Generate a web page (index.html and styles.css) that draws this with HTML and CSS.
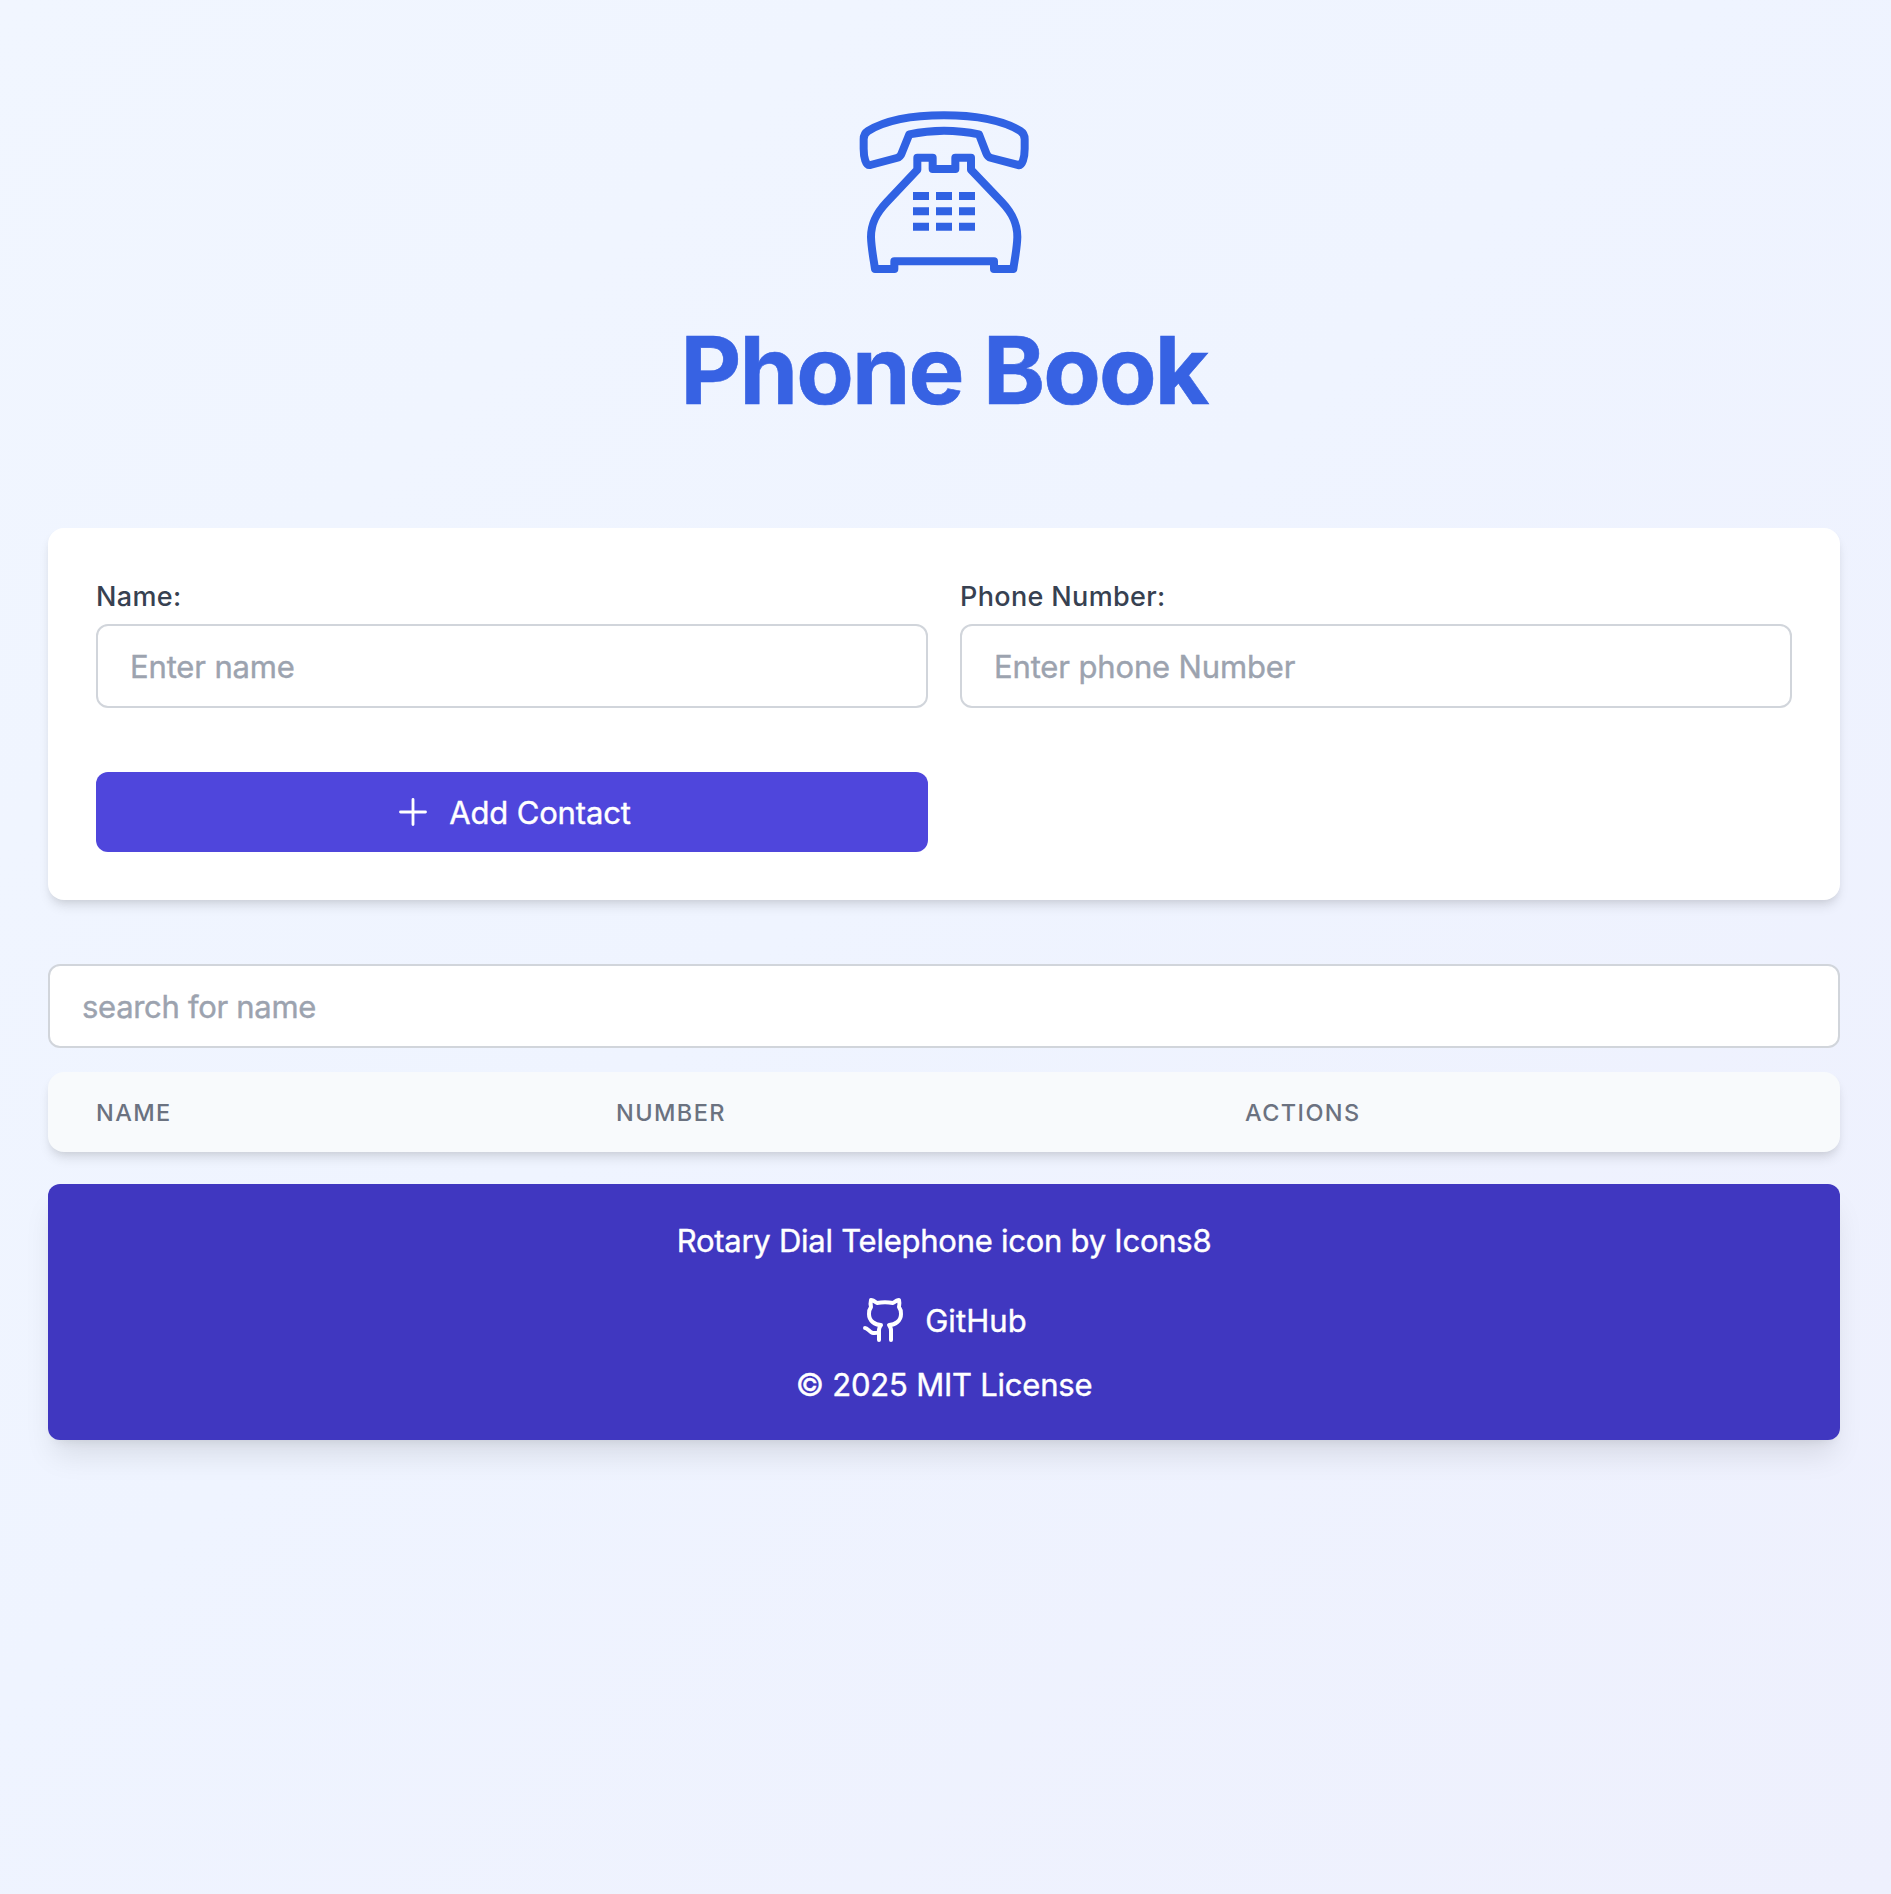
FILE: index.html
```html
<!DOCTYPE html>
<html lang="en">
<head>
<meta charset="utf-8">
<title>Phone Book</title>
<link rel="stylesheet" href="styles.css">
</head>
<body>
<div class="page">
  <header class="hero">
    <svg class="hero-icon" viewBox="24 18 576 576" fill="none" stroke="currentColor" stroke-width="24" stroke-linejoin="round">
      <path d="M312 76C410 76 490 92 541 123Q554 131 554 148V176C554 202 547 228 535 225L454 204Q443 201 439 190L417 133Q365 122 312 122Q260 122 208 133L185 190Q181 201 170 204L91 225C77 228 71 202 71 176V148Q71 131 84 123C135 92 214 76 312 76Z"/>
      <path d="M232 203H278V237H346V203H393V239L486 337C519 372 532 402 532 441C531 476 524 508 520 537H462V514H163V537H105C101 508 94 476 93 441C93 402 107 372 140 337L232 239Z"/>
      <path stroke-width="24" stroke-dasharray="48 21" d="M219 318H405M219 364H405M219 410H405"/>
    </svg>
    <h1 class="title">Phone Book</h1>
  </header>
  <form class="card">
    <div class="field">
      <label class="label" for="name">Name:</label>
      <input class="input" id="name" type="text" placeholder="Enter name">
    </div>
    <div class="field">
      <label class="label" for="phone">Phone Number:</label>
      <input class="input" id="phone" type="text" placeholder="Enter phone Number">
    </div>
    <button class="add" type="button">
      <svg class="add-icon" viewBox="0 0 24 24" fill="none" stroke="currentColor" stroke-width="1.7" stroke-linecap="round"><path d="M12 4.5v15m7.5-7.5h-15"/></svg>
      <span class="add-text">Add Contact</span>
    </button>
  </form>
  <input class="input search" type="text" placeholder="search for name">
  <div class="table">
    <span>Name</span><span>Number</span><span>Actions</span>
  </div>
  <footer class="footer">
    <p class="credit">Rotary Dial Telephone icon by Icons8</p>
    <a class="github">
      <svg class="github-icon" viewBox="0 0 24 24" fill="none" stroke="currentColor" stroke-width="2" stroke-linecap="round" stroke-linejoin="round"><path d="M15 22v-4a4.8 4.8 0 0 0-1-3.5c3 0 6-2 6-5.5.08-1.25-.27-2.48-1-3.5.28-1.15.28-2.35 0-3.5 0 0-1 0-3 1.5-2.64-.5-5.36-.5-8 0C6 2 5 2 5 2c-.3 1.15-.3 2.35 0 3.5A5.403 5.403 0 0 0 4 9c0 3.5 3 5.5 6 5.5-.39.49-.68 1.05-.85 1.65-.17.6-.22 1.23-.15 1.85v4"/><path d="M9 18c-4.51 2-5-2-7-2"/></svg>
      <span class="github-text">GitHub</span>
    </a>
    <p class="license">© 2025 MIT License</p>
  </footer>
</div>
</body>
</html>
```
FILE: styles.css
```css
* { box-sizing: border-box; margin: 0; }
body { font-family: Inter, "Liberation Sans", sans-serif; font-size: 31px; line-height: 48px; }
.page {
  min-height: 1894px;
  padding: 96px 51px 96px 48px;
  background: linear-gradient(to bottom right, #f1f6ff, #eff4ff 45%, #eef0fd);
}
.hero { display: flex; flex-direction: column; align-items: center; height: 432px; color: #3062e3; }
.hero-icon { width: 192px; height: 192px; }
.title { margin-top: 34px; font-size: 94px; line-height: 96px; font-weight: 700; letter-spacing: -1.9px; color: #3762e3; -webkit-text-stroke: .6px; }
.card {
  display: grid; grid-template-columns: 1fr 1fr; column-gap: 32px; row-gap: 64px;
  padding: 48px; height: 372px; background: #fff; border-radius: 16px;
  box-shadow: 0 8px 12px -2px rgba(0,0,0,.1), 0 4px 8px -4px rgba(0,0,0,.1);
}
.field { display: flex; flex-direction: column; height: 132px; }
.label { height: 48px; line-height: 42px; font-size: 27px; font-weight: 500; letter-spacing: .35px; color: #374151; }
.input {
  width: 100%; height: 84px; padding: 0 32px; border: 2px solid #d1d5db; border-radius: 12px;
  background: #fff; font: inherit; letter-spacing: -.14px; color: #111827; -webkit-text-stroke: .4px;
}
.input::placeholder { color: #9ca3af; opacity: 1; }
.add {
  display: flex; align-items: center; justify-content: center; gap: 16px; height: 80px;
  border: 0; border-radius: 12px; background: #4f46dc; color: #fff; font: inherit; letter-spacing: -.16px;
  -webkit-text-stroke: .4px;
}
.add-icon { width: 40px; height: 40px; }
.add-text { padding-top: 2px; }
.search { display: block; margin-top: 64px; letter-spacing: -.3px; }
.table {
  display: grid; grid-template-columns: 520px 629px 1fr; align-items: center;
  margin-top: 24px; height: 80px; padding: 2px 0 0 48px; border-radius: 16px; background: #f8fafc;
  font-size: 23.5px; font-weight: 500; letter-spacing: 1.4px; text-transform: uppercase; color: #6b7280;
  box-shadow: 0 8px 12px -2px rgba(0,0,0,.1), 0 4px 8px -4px rgba(0,0,0,.1);
}
.footer {
  display: flex; flex-direction: column; align-items: center;
  margin-top: 32px; height: 256px; padding-top: 33px; border-radius: 12px; background: #4037c0; color: #fff;
  box-shadow: 0 20px 30px -6px rgba(0,0,0,.1), 0 8px 12px -8px rgba(0,0,0,.1);
  -webkit-text-stroke: .4px;
}
.credit { letter-spacing: -.25px; }
.license { letter-spacing: -.23px; }
.github { display: flex; align-items: center; gap: 16px; margin: 31px 0 17px; height: 48px; }
.github-icon { width: 48px; height: 48px; }
.github-text { padding-top: 2px; letter-spacing: .1px; }
```
